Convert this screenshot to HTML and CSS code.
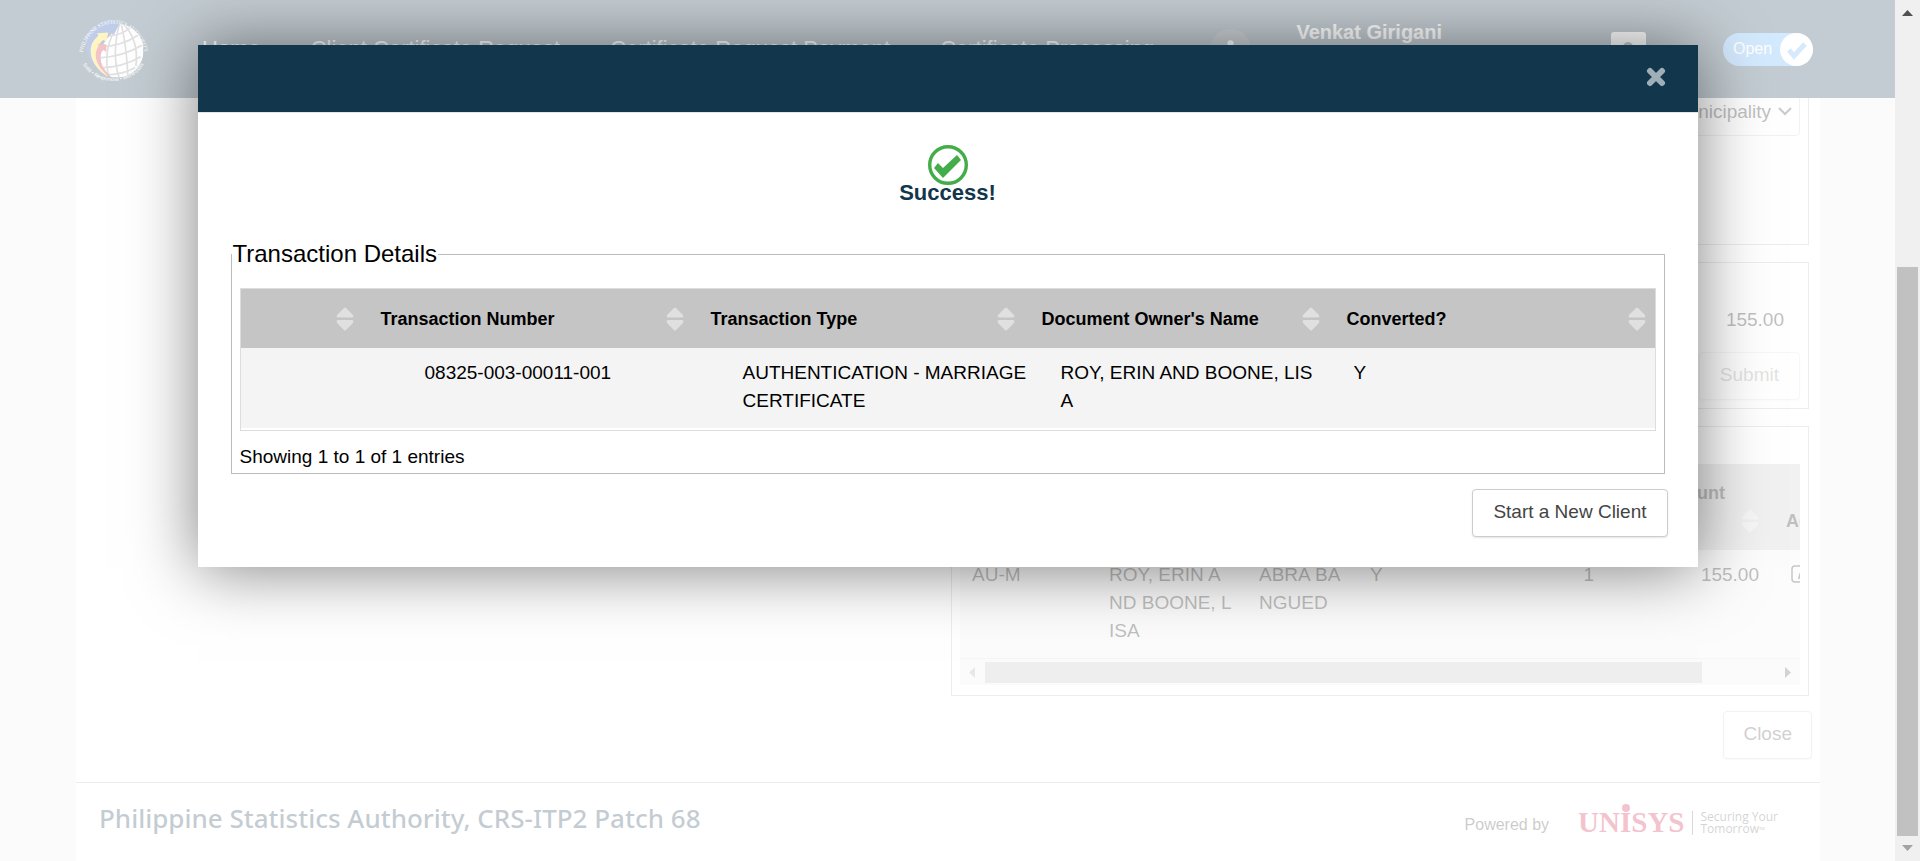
FILE: index.html
```html
<!DOCTYPE html>
<html lang="en">
<head>
<meta charset="utf-8">
<title>Transaction Details</title>
<link rel="stylesheet" href="styles.css">
</head>
<body>
<svg class="defs" aria-hidden="true">
  <symbol id="sort" viewBox="0 0 18 24">
    <path d="M8 1 Q9 0 10 1 L17 8 Q18 10 16 10.500 H2 Q0 10 1 8Z M8 23 Q9 24 10 23 L17 16 Q18 13 16 13 H2 Q0 13 1 16Z"/>
  </symbol>
</svg>

<div class="view">
  <header class="topbar">
    <svg class="seal" viewBox="50 36 220 220" role="img" aria-label="Philippine Statistics Authority seal">
      <defs>
        <path id="arc-top" d="M69 166 A94 108 0 0 1 255 166"/>
        <path id="arc-bottom" d="M68 190 A102 92 0 0 0 254 190"/>
        <clipPath id="globe"><path d="M176 74 A80 80 0 1 1 150 231 C118 205 108 150 152 108Z"/></clipPath>
      </defs>
      <g clip-path="url(#globe)">
        <rect x="80" y="60" width="170" height="180" fill="#fff"/>
        <g fill="none" stroke="#888" stroke-width="5">
          <path d="M150 110 Q185 108 214 84"/>
          <path d="M124 142 Q188 140 234 108"/>
          <path d="M115 176 Q190 172 246 138"/>
          <path d="M124 205 Q190 203 242 172"/>
          <path d="M136 226 Q190 226 226 204"/>
          <path d="M176 74 Q126 150 148 232"/>
          <path d="M180 72 Q155 160 178 234"/>
          <path d="M184 72 Q202 150 204 230"/>
          <path d="M188 72 Q238 120 228 200"/>
        </g>
      </g>
      <path fill="#0038a8" d="M145 230 C96 208 66 150 82 108 C94 86 112 72 137 68 L140 60 L180 73 L163 106 L150 100 C98 100 92 180 145 230Z"/>
      <path fill="#fcd116" d="M142 230 C92 196 78 144 112 114 L117 107 L112 102 L146 100 L140 127 L131 122 C104 140 112 194 146 230Z"/>
      <path fill="#ce1126" d="M148 231 C108 200 100 162 118 140 L113 135 L140 135 L140 158 L131 152 C112 172 128 208 154 231Z"/>
      <text class="seal-top"><textPath href="#arc-top" startOffset="50%">PHILIPPINE STATISTICS AUTHORITY</textPath></text>
      <text class="seal-bottom"><textPath href="#arc-bottom" startOffset="50%">Solid • Responsive • World-class</textPath></text>
    </svg>
    <nav class="menu">
      <a href="#">Home</a>
      <a href="#">Client Certificate Request</a>
      <a href="#">Certificate Request Payment</a>
      <a href="#">Certificate Processing</a>
    </nav>
    <button class="info" type="button" aria-label="Information">
      <svg viewBox="0 0 40 40"><circle cx="20" cy="14" r="3" fill="#fff"/><path d="M18 20h4v12h-4z" fill="#fff"/></svg>
    </button>
    <div class="user">Venkat Girigani</div>
    <button class="badge" type="button" aria-label="Profile">
      <svg viewBox="0 0 35 35"><rect width="35" height="35" rx="3" fill="#fff"/><circle cx="17" cy="15" r="5" fill="#12364b"/><path d="M8 30q9-12 18 0z" fill="#12364b"/></svg>
    </button>
    <button class="toggle" type="button">Open
      <svg viewBox="0 0 33 33"><circle cx="16.500" cy="16.500" r="16.500" fill="#fff"/><path d="M9 17l5 6 11-12" fill="none" stroke="#57abf7" stroke-width="5"/></svg>
    </button>
  </header>

  <main class="page">
    <div class="side">
      <section class="panel place">
        <select aria-label="Municipality"><option>Municipality</option></select>
        <svg class="chevron" viewBox="0 0 14 9"><path d="M1 1l6 6 6-6" fill="none" stroke="#333" stroke-width="2"/></svg>
      </section>
      <section class="panel total">
        <span class="sum">155.00</span>
        <button class="btn" type="button" disabled>Submit</button>
      </section>
      <section class="panel items">
        <div class="clip">
          <table class="list">
            <colgroup><col class="i1"><col class="i2"><col class="i3"><col class="i4"><col class="i5"><col class="i6"><col class="i7"></colgroup>
            <thead><tr><th></th><th></th><th></th><th></th><th></th>
              <th class="amount">Amount<svg class="sort"><use href="#sort"/></svg></th><th class="action">Action</th></tr></thead>
            <tbody><tr><td>AU-M</td><td class="name">ROY, ERIN AND BOONE, LISA</td><td>ABRA BANGUED</td><td>Y</td><td class="num">1</td><td class="num">155.00</td>
              <td class="edit"><svg viewBox="0 0 18 18"><path d="M11 1H4Q1 1 1 4V14Q1 17 4 17H14Q17 17 17 14V9M8 13l1-4 8-8 2 3-8 8z" fill="none" stroke="#222" stroke-width="1.500"/></svg></td></tr></tbody>
          </table>
          <div class="hbar">
            <svg viewBox="0 0 6 11"><path d="M6 0v11L0 5.500z" fill="#a3a3a3"/></svg>
            <div class="hthumb"></div>
            <svg viewBox="0 0 6 11"><path d="M0 0v11l6-5.500z" fill="#505050"/></svg>
          </div>
        </div>
      </section>
      <button class="btn close-page" type="button">Close</button>
    </div>
    <footer class="foot">
      <div class="version">Philippine Statistics Authority, CRS-ITP2 Patch 68</div>
      <div class="powered">Powered by</div>
      <div class="brand">UN<span class="dotted">I</span>SYS</div>
      <div class="tagline">Securing Your<br>Tomorrow<span class="tm">™</span></div>
    </footer>
  </main>

  <div class="overlay">
    <div class="modal" role="dialog" aria-label="Transaction Details">
      <div class="modal-head">
        <button class="dismiss" type="button" aria-label="Close">
          <svg viewBox="0 0 20 20"><path d="M4 4l12 12M16 4L4 16" stroke="#a0afb7" stroke-width="6" stroke-linecap="round"/></svg>
        </button>
      </div>
      <div class="modal-body">
        <div class="result">
          <svg viewBox="0 0 40 40"><circle cx="20" cy="20" r="18.300" fill="none" stroke="#43ad49" stroke-width="3.400"/><path d="M6 23l4-5 5 5 14-13 4 5-18 18z" fill="#43ad49"/></svg>
          <h2>Success!</h2>
        </div>
        <fieldset class="details">
          <legend>Transaction Details</legend>
          <table class="grid">
            <colgroup><col class="c1"><col class="c2"><col class="c3"><col class="c4"><col class="c5"></colgroup>
            <thead><tr>
              <th><div><span></span><svg class="sort"><use href="#sort"/></svg></div></th>
              <th><div><span>Transaction Number</span><svg class="sort"><use href="#sort"/></svg></div></th>
              <th><div><span>Transaction Type</span><svg class="sort"><use href="#sort"/></svg></div></th>
              <th><div><span>Document Owner's Name</span><svg class="sort"><use href="#sort"/></svg></div></th>
              <th><div><span>Converted?</span><svg class="sort"><use href="#sort"/></svg></div></th>
            </tr></thead>
            <tbody><tr>
              <td></td>
              <td class="number">08325-003-00011-001</td>
              <td class="type">AUTHENTICATION - MARRIAGE CERTIFICATE</td>
              <td class="owner">ROY, ERIN AND BOONE, LISA</td>
              <td class="flag">Y</td>
            </tr></tbody>
          </table>
          <p class="count">Showing 1 to 1 of 1 entries</p>
        </fieldset>
        <button class="btn start" type="button">Start a New Client</button>
      </div>
    </div>
  </div>
</div>

<div class="vbar">
  <svg viewBox="0 0 11 6"><path d="M0 6h11L5.500 0z" fill="#505050"/></svg>
  <div class="vthumb"></div>
  <svg viewBox="0 0 11 6"><path d="M0 0h11L5.500 6z" fill="#a3a3a3"/></svg>
</div>
</body>
</html>
```

FILE: styles.css
```css
* { box-sizing: border-box; }

body {
  margin: 0;
  height: 100vh;
  display: flex;
  overflow: hidden;
  background: #efefef;
  color: #000;
  font: 19px/28px "Liberation Sans", Arial, sans-serif;
}

button, select { font: inherit; }
.defs { position: absolute; width: 0; height: 0; }

.view {
  position: relative;
  flex: 1;
  min-width: 0;
  overflow: hidden;
}

/* Top bar */
.topbar {
  position: absolute;
  z-index: 1;
  top: 0;
  left: 0;
  right: 0;
  height: 98px;
  padding: 0 82px 0 76px;
  display: flex;
  align-items: center;
  background: #12364b;
  color: #fff;
}
.seal { width: 74px; height: 74px; margin-bottom: 2px; overflow: visible; }
.seal text { fill: #fff; text-anchor: middle; }
.seal-top { font: 16px "Liberation Serif", serif; }
.seal-bottom { font: 15px "Liberation Sans", sans-serif; }
.menu {
  display: flex;
  gap: 50px;
  margin-left: 52px;
  font-size: 22px;
  white-space: nowrap;
}
.menu a { color: #fff; text-decoration: none; }
.info {
  width: 41px;
  height: 41px;
  margin-left: auto;
  padding: 0;
  border: 0;
  border-radius: 50%;
  background: #34495a;
}
.user {
  align-self: flex-start;
  margin: 18px 169px 0 45px;
  font-size: 20px;
  font-weight: bold;
  line-height: 28px;
}
.badge {
  width: 35px;
  height: 35px;
  padding: 0;
  border: 0;
  background: none;
}
.badge svg, .info svg { display: block; width: 100%; }
.toggle {
  display: flex;
  align-items: center;
  justify-content: space-between;
  width: 90px;
  height: 33px;
  margin-left: 77px;
  padding: 0 0 0 10px;
  border: 0;
  border-radius: 17px;
  background: #50a8f7;
  color: #fff;
  font-size: 16px;
}
.toggle svg { width: 33px; height: 33px; }

/* Page behind the dialog */
.page {
  min-height: 100%;
  margin: 0 75px 0 76px;
  padding-top: 60px;
  background: #fff;
}
.side {
  display: flex;
  flex-direction: column;
  gap: 17px;
  margin-left: 50%;
  padding: 0 11px 23px 3px;
}
.panel { border: 1px solid #b8b8b8; padding: 0 8px; }
.place { position: relative; padding-top: 27px; padding-bottom: 108px; }
.place select {
  display: block;
  width: 100%;
  height: 48px;
  padding: 0 28px;
  border: 1px solid #ccc;
  border-radius: 4px;
  appearance: none;
  background: #fff;
  color: #000;
  text-align-last: right;
}
.chevron { position: absolute; top: 46px; right: 16px; width: 14px; height: 9px; }
.total {
  display: flex;
  flex-direction: column;
  align-items: flex-end;
  gap: 18px;
  padding-top: 43px;
  padding-bottom: 8px;
}
.sum { padding-right: 16px; }
.items { padding-top: 37px; padding-bottom: 10px; }
.clip { overflow: hidden; }
.list {
  width: 940px;
  table-layout: fixed;
  border-collapse: collapse;
}
.i1 { width: 137px; }
.i2 { width: 150px; }
.i3 { width: 111px; }
.i4 { width: 123px; }
.i5 { width: 125px; }
.i6 { width: 165px; }
.list th {
  height: 86px;
  padding: 15px;
  background: #c5c5c5;
  font-weight: bold;
  font-size: 18px;
  text-align: left;
  vertical-align: bottom;
}
.list .amount {
  position: relative;
  padding-right: 46px;
  text-align: right;
  vertical-align: top;
}
.amount .sort { position: absolute; right: 12px; bottom: 17px; }
.list td {
  padding: 11px 12px 13px;
  border-bottom: 1px solid #ddd;
  background: #f4f4f4;
  vertical-align: top;
  word-break: break-all;
}
.list .name { padding-right: 15px; }
.list .num { text-align: right; }
.list .edit { padding-left: 20px; }
.edit svg { display: block; width: 18px; height: 18px; margin-top: 4px; overflow: visible; }
.hbar {
  display: flex;
  align-items: center;
  height: 26px;
  padding: 0 9px;
  background: #f0f0f0;
}
.hbar svg { width: 6px; height: 11px; }
.hthumb { width: 717px; height: 21px; margin: 0 auto 0 10px; background: #bdbdbd; }

.btn {
  height: 48px;
  padding: 0 20px 3px;
  border: 1px solid #ccc;
  border-radius: 4px;
  background: #fff;
  color: #444;
  box-shadow: 0 1px 2px rgba(0, 0, 0, .1);
}
.btn:disabled { opacity: .6; }
.close-page { align-self: flex-end; margin: -2px -3px 0 0; padding: 0 19px 3px; }

.foot {
  display: flex;
  align-items: center;
  height: 78px;
  padding: 0 42px 0 23px;
  border-top: 1px solid #b8b8b8;
}
.version {
  margin-right: auto;
  padding-bottom: 8px;
  color: #12364b;
  font: 500 26px/36px "Noto Sans", "Open Sans", sans-serif;
}
.powered { padding-top: 6px; color: #333; font-size: 16px; }
.brand {
  margin: 0 8px 0 29px;
  color: #cf103f;
  font: bold 29px/40px "Liberation Serif", serif;
}
.dotted { position: relative; }
.dotted::before {
  content: "";
  position: absolute;
  top: -2px;
  left: 2px;
  width: 8px;
  height: 8px;
  border-radius: 50%;
  background: #cf103f;
}
.tagline {
  margin-top: 2px;
  padding-left: 7px;
  border-left: 1px solid #666;
  color: #555;
  font: 500 12px/12px "Open Sans", sans-serif;
}
.tm { font-size: 8px; line-height: 8px; }

/* Dialog */
.overlay {
  position: absolute;
  z-index: 2;
  inset: 0;
  display: flex;
  justify-content: center;
  align-items: flex-start;
  padding-top: 45px;
  background: rgba(255, 255, 255, .75);
}
.modal {
  width: 1500px;
  max-width: 94%;
  background: #fff;
  box-shadow: 0 2px 62px rgba(0, 0, 0, .5);
}
.modal-head {
  display: flex;
  align-items: center;
  justify-content: flex-end;
  height: 68px;
  padding: 0 32px 3px;
  border-bottom: 1px solid #e5e5e5;
  background: #12364b;
}
.dismiss { width: 20px; height: 20px; padding: 0; border: 0; background: none; }
.dismiss svg { display: block; }
.modal-body {
  display: flex;
  flex-direction: column;
  padding: 32px 30px 30px;
}
.result { display: flex; flex-direction: column; align-items: center; }
.result svg { width: 40px; height: 40px; }
.result h2 {
  margin: 0;
  color: #12364b;
  font-size: 22px;
  font-weight: bold;
  line-height: 16px;
}
.details {
  min-width: 0;
  margin: 35px 3px 15px;
  padding: 16px 8px 2px;
  border: 1px solid #bbb;
}
.details legend { margin-left: -8px; padding: 0 1px; font-size: 24px; line-height: 36px; }
.grid {
  width: 100%;
  table-layout: fixed;
  border-collapse: separate;
  border-spacing: 0;
  border: 1px solid #ddd;
}
.c1 { width: 137px; }
.c2 { width: 330px; }
.c3 { width: 331px; }
.c4 { width: 305px; }
.grid th {
  height: 59px;
  padding: 0 24px 0 3px;
  background: #c5c5c5;
  font-size: 18px;
  font-weight: bold;
  text-align: left;
}
.grid th:last-child { padding-right: 9px; }
.grid th div { display: flex; justify-content: space-between; align-items: center; }
.sort { width: 18px; height: 24px; fill: #e0e0e0; }
.grid td {
  padding: 11px 0 13px;
  border-bottom: 2px solid #fff;
  background: #f4f4f4;
  vertical-align: top;
}
.grid .number { padding-left: 47px; }
.grid .type { padding-left: 35px; }
.grid .owner { padding-left: 22px; padding-right: 20px; word-break: break-all; }
.grid .flag { padding-left: 10px; }
.count { margin: 12px 0 0; }
.start { align-self: flex-end; }

/* Window scroll bar */
.vbar {
  display: flex;
  flex-direction: column;
  align-items: center;
  width: 25px;
  padding: 10px 0 10px;
  background: #f0f0f0;
}
.vbar svg { width: 11px; height: 6px; }
.vthumb { width: 21px; height: 569px; margin: auto 0 9px; background: #c1c1c1; }
```
